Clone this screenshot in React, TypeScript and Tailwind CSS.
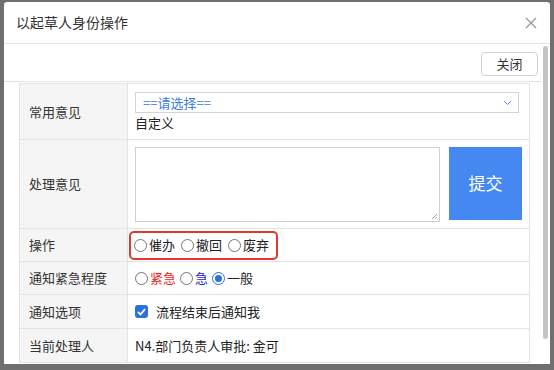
import React from 'react';

const font = { fontFamily: '"Noto Sans CJK SC", "Noto Sans", sans-serif' };

function Radio({ checked = false }: { checked?: boolean }) {
  return checked ? (
    <span className="inline-flex h-[13px] w-[13px] shrink-0 items-center justify-center rounded-full border-[1.5px] border-[#2b6fe0] bg-white">
      <span className="h-[7px] w-[7px] rounded-full bg-[#2b6fe0]" />
    </span>
  ) : (
    <span className="inline-block h-[13px] w-[13px] shrink-0 rounded-full border border-[#767676] bg-white" />
  );
}

function Row({ label, height, children }: { label: string; height: string; children: React.ReactNode }) {
  return (
    <div className={`grid grid-cols-[108px_401px] border-b border-[#e3e3e3] ${height}`}>
      <div className="flex items-center border-r border-[#e3e3e3] bg-[#f5f5f5] pl-[9px] text-[13px] text-[#333]">{label}</div>
      <div className="flex items-center pl-[7px] text-[13px] text-[#222]">{children}</div>
    </div>
  );
}

export default function App() {
  return (
    <div className="h-[370px] w-[554px] overflow-hidden bg-[#6f6f6f] pl-[4px] pt-[2px]" style={font}>
      <div className="flex h-[362px] w-[546px] flex-col overflow-hidden rounded-t-[3px] bg-white">
        <div className="flex h-[42px] shrink-0 items-center justify-between border-b border-[#e5e5e5] pl-[12px] pr-[12px]">
          <span className="text-[14px] text-[#333]">以起草人身份操作</span>
          <svg width="12" height="12" viewBox="0 0 12 12" className="mr-[1px]">
            <path d="M1 1 L11 11 M11 1 L1 11" stroke="#9a9a9a" strokeWidth="1.4" />
          </svg>
        </div>
        <div className="flex flex-1 overflow-hidden">
          <div className="flex w-[538px] shrink-0 flex-col">
            <div className="flex h-[38px] shrink-0 items-start justify-end border-b border-[#e3e3e3] pr-[4px] pt-[8px]">
              <button className="h-[24px] w-[57px] rounded-[4px] border border-[#d0d0d0] bg-white text-[13px] text-[#333]">关闭</button>
            </div>
            <div className="ml-[15px] mt-[1px] w-[511px] shrink-0 border-l border-r border-t border-[#e3e3e3]">
              <Row label="常用意见" height="h-[56px]">
                <div className="flex w-full flex-col pt-[1px]">
                  <div className="flex h-[21px] w-[384px] items-center justify-between border border-[#d4d4d4] pl-[7px] pr-[6px] text-[13px] text-[#3b7be0]">
                    <span>==请选择==</span>
                    <svg width="9" height="6" viewBox="0 0 9 6">
                      <path d="M1 1 L4.5 4.5 L8 1" fill="none" stroke="#5b8de0" strokeWidth="1" />
                    </svg>
                  </div>
                  <span className="mt-[1px] text-[13px] leading-[18px]">自定义</span>
                </div>
              </Row>
              <Row label="处理意见" height="h-[89px]">
                <div className="flex items-start gap-[9px]">
                  <div className="relative h-[75px] w-[305px] border border-[#cfcfcf]">
                    <svg width="7" height="7" viewBox="0 0 7 7" className="absolute bottom-[1px] right-[1px]">
                      <path d="M1 6 L6 1 M4 6 L6 4" stroke="#888" strokeWidth="0.8" />
                    </svg>
                  </div>
                  <div className="flex h-[73px] w-[73px] items-center justify-center bg-[#4688f1] text-[17px] text-white">提交</div>
                </div>
              </Row>
              <Row label="操作" height="h-[33px]">
                <div className="-ml-[6px] flex h-[29px] w-[149px] items-center gap-[2px] rounded-[5px] border-2 border-[#e2392c] pl-[3px]">
                  <Radio /><span className="mr-[4px]">催办</span>
                  <Radio /><span className="mr-[4px]">撤回</span>
                  <Radio /><span>废弃</span>
                </div>
              </Row>
              <Row label="通知紧急程度" height="h-[33px]">
                <div className="flex items-center gap-[2px]">
                  <Radio /><span className="mr-[2px] text-[#e8251e]">紧急</span>
                  <Radio /><span className="mr-[2px] text-[#1a26c9]">急</span>
                  <Radio checked /><span>一般</span>
                </div>
              </Row>
              <Row label="通知选项" height="h-[34px]">
                <div className="flex items-center gap-[8px]">
                  <span className="flex h-[13px] w-[13px] items-center justify-center rounded-[3px] bg-[#2b6fe0]">
                    <svg width="9" height="8" viewBox="0 0 9 8">
                      <path d="M1 4 L3.5 6.5 L8 1.2" fill="none" stroke="white" strokeWidth="1.8" />
                    </svg>
                  </span>
                  <span>流程结束后通知我</span>
                </div>
              </Row>
              <Row label="当前处理人" height="h-[34px]">
                <span>N4.部门负责人审批: 金可</span>
              </Row>
            </div>
          </div>
          <div className="ml-[1px] mt-[2px] h-[293px] w-[5px] shrink-0 rounded-full bg-[#c4c4c4]" />
        </div>
      </div>
    </div>
  );
}
